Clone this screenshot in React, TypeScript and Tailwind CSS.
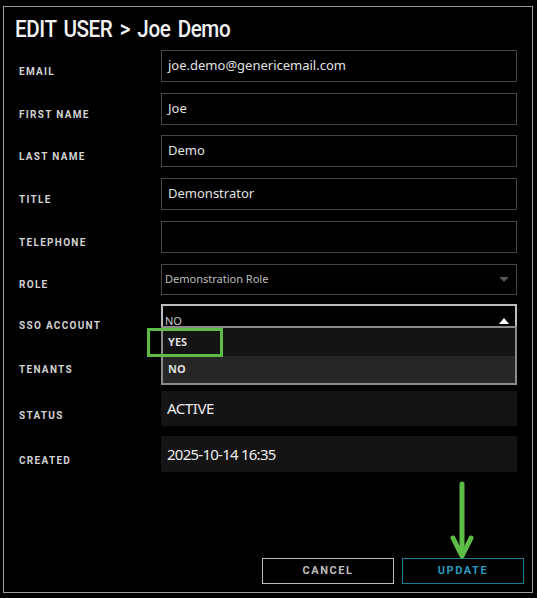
import React from "react";

const rows: { label: string; value: string; top: string }[] = [
  { label: "EMAIL", value: "joe.demo@genericemail.com", top: "mt-[0px]" },
  { label: "FIRST NAME", value: "Joe", top: "mt-[11px]" },
  { label: "LAST NAME", value: "Demo", top: "mt-[10px]" },
  { label: "TITLE", value: "Demonstrator", top: "mt-[11px]" },
  { label: "TELEPHONE", value: "", top: "mt-[11px]" },
];

const Label = ({ children, low }: { children: React.ReactNode; low?: boolean }) => (
  <div
    className={`w-[142px] shrink-0 ${low ? "mt-[13px]" : "mt-[10px]"} text-[10px] font-bold tracking-[0.13em] text-[#d2d2d2] font-['Roboto',sans-serif]`}
  >
    {children}
  </div>
);

export default function App() {
  return (
    <div className="w-[537px] h-[598px] bg-black overflow-hidden pt-[6px] pl-[3px]">
      <div className="relative w-[530px] h-[587px] border border-[#9c9c9c] bg-black flex flex-col px-[15px]">
        {/* Title */}
        <h1
          className="-ml-[4px] mt-[8px] h-[28px] leading-[28px] text-[24px] font-medium tracking-[-0.02em] [word-spacing:3px] text-[#f2f2f2] font-['Roboto',sans-serif] whitespace-nowrap"
          style={{ transform: "scaleX(0.86)", transformOrigin: "left" }}
        >
          EDIT USER &gt; Joe Demo
        </h1>

        <div className="mt-[7px] flex flex-col font-['Noto_Sans',sans-serif]">
          {rows.map((r) => (
            <div key={r.label} className={`flex items-center ${r.top}`}>
              <Label>{r.label}</Label>
              <div className="flex-1 h-[32px] border border-[#474747] flex items-center px-[6px] text-[13px] text-[#e2e2e2]">
                {r.value}
              </div>
            </div>
          ))}

          {/* Role */}
          <div className="flex items-center mt-[11px]">
            <Label>ROLE</Label>
            <div className="flex-1 h-[31px] border border-[#474747] flex items-center justify-between pl-[3px] pr-[7px] text-[11px] text-[#bdbdbd]">
              <span>Demonstration Role</span>
              <svg width="10" height="5" viewBox="0 0 10 5">
                <path d="M0 0 L10 0 L5 5 Z" fill="#555" />
              </svg>
            </div>
          </div>

          {/* SSO account */}
          <div className="flex items-center mt-[9px]">
            <Label>SSO ACCOUNT</Label>
            <div className="flex-1 h-[32px] border-2 border-[#bdbdbd] border-b-0 flex items-center justify-between pl-[2px] pr-[6px] text-[11px] text-[#cfcfcf]">
              <span>NO</span>
              <svg width="10" height="6" viewBox="0 0 10 6">
                <path d="M5 0 L10 6 L0 6 Z" fill="#fff" />
              </svg>
            </div>
          </div>

          {/* Tenants */}
          <div className="flex items-center mt-[11px]">
            <Label low>TENANTS</Label>
            <div className="flex-1 h-[32px] border border-[#474747]" />
          </div>

          {/* Status */}
          <div className="flex items-center mt-[12px]">
            <Label low>STATUS</Label>
            <div className="flex-1 h-[35px] bg-[#141414] flex items-center px-[6px] text-[15px] tracking-[-0.03em] text-[#ececec]">
              ACTIVE
            </div>
          </div>

          {/* Created */}
          <div className="flex items-center mt-[10px]">
            <Label low>CREATED</Label>
            <div className="flex-1 h-[36px] bg-[#141414] flex items-center px-[6px] text-[15px] tracking-[-0.05em] text-[#ececec]">
              2025-10-14 16:35
            </div>
          </div>
        </div>

        {/* Buttons */}
        <div className="mt-auto mb-[8px] -mr-[7px] flex justify-end gap-[8px] font-['Roboto',sans-serif]">
          <button className="w-[132px] h-[26px] border border-[#bdbdbd] text-[11px] font-bold tracking-[0.14em] text-[#bdbdbd]">
            CANCEL
          </button>
          <button className="w-[122px] h-[26px] border border-[#1e7c96] text-[11px] font-bold tracking-[0.14em] text-[#2a98bc]">
            UPDATE
          </button>
        </div>

        {/* SSO dropdown list */}
        <div className="absolute left-[157px] top-[319px] w-[356px] border-2 border-[#8a8a8a] font-['Noto_Sans',sans-serif] text-[11px] font-bold text-[#dcdcdc]">
          <div className="h-[28px] bg-[#141414] flex items-center px-[5px]">YES</div>
          <div className="h-[27px] bg-[#262626] flex items-center px-[5px]">NO</div>
        </div>

        {/* Highlight box */}
        <div className="absolute left-[143px] top-[321px] w-[76px] h-[29px] border-[3px] border-[#5cbc45]" />

        {/* Green arrow */}
        <svg className="absolute left-[446px] top-[474px]" width="24" height="78" viewBox="0 0 24 78">
          <line x1="12" y1="3" x2="12" y2="70" stroke="#5cbc45" strokeWidth="5" strokeLinecap="round" />
          <path d="M3 57 L12 75 L21 57" fill="none" stroke="#5cbc45" strokeWidth="5" strokeLinecap="round" strokeLinejoin="round" />
        </svg>
      </div>
    </div>
  );
}
